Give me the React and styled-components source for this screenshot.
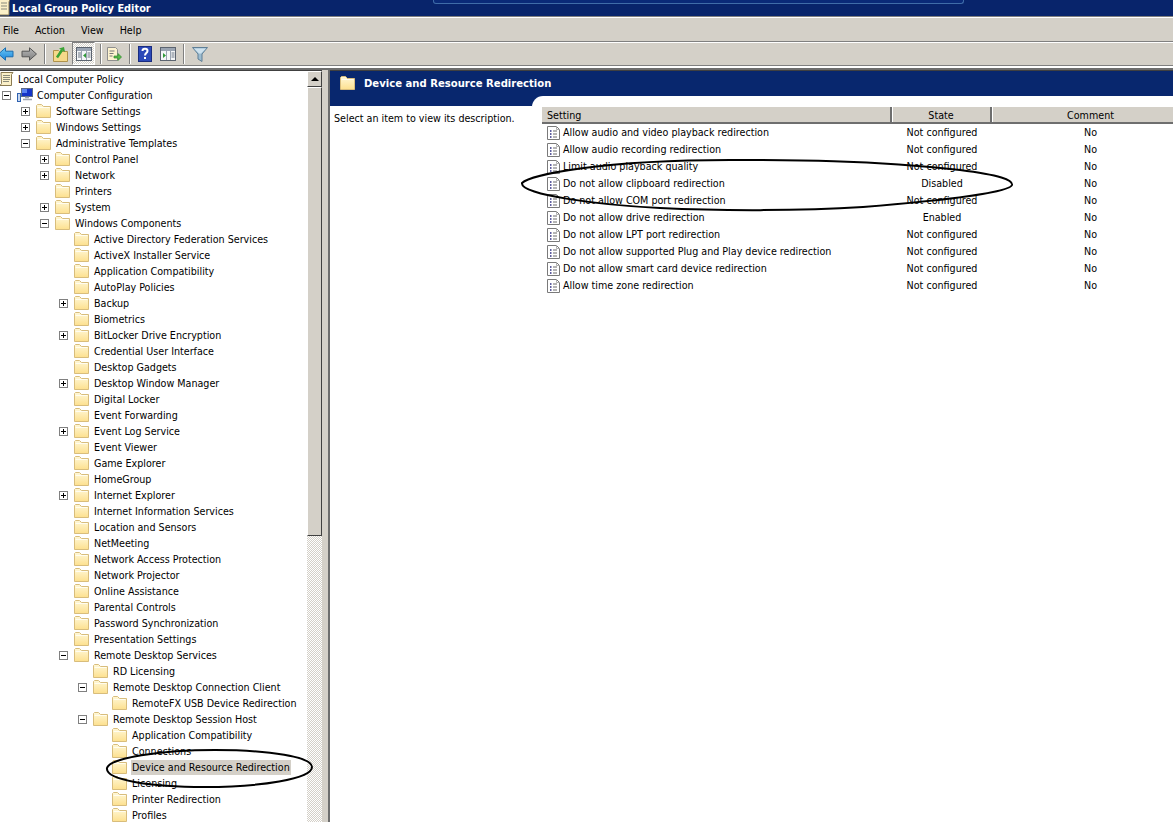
import React from "react";
import styled, { createGlobalStyle } from "styled-components";

const TREE = [
  [0, "", "policy", "Local Computer Policy"],
  [1, "-", "computer", "Computer Configuration"],
  [2, "+", "folder", "Software Settings"],
  [2, "+", "folder", "Windows Settings"],
  [2, "-", "folder", "Administrative Templates"],
  [3, "+", "folder", "Control Panel"],
  [3, "+", "folder", "Network"],
  [3, "", "folder", "Printers"],
  [3, "+", "folder", "System"],
  [3, "-", "folder", "Windows Components"],
  [4, "", "folder", "Active Directory Federation Services"],
  [4, "", "folder", "ActiveX Installer Service"],
  [4, "", "folder", "Application Compatibility"],
  [4, "", "folder", "AutoPlay Policies"],
  [4, "+", "folder", "Backup"],
  [4, "", "folder", "Biometrics"],
  [4, "+", "folder", "BitLocker Drive Encryption"],
  [4, "", "folder", "Credential User Interface"],
  [4, "", "folder", "Desktop Gadgets"],
  [4, "+", "folder", "Desktop Window Manager"],
  [4, "", "folder", "Digital Locker"],
  [4, "", "folder", "Event Forwarding"],
  [4, "+", "folder", "Event Log Service"],
  [4, "", "folder", "Event Viewer"],
  [4, "", "folder", "Game Explorer"],
  [4, "", "folder", "HomeGroup"],
  [4, "+", "folder", "Internet Explorer"],
  [4, "", "folder", "Internet Information Services"],
  [4, "", "folder", "Location and Sensors"],
  [4, "", "folder", "NetMeeting"],
  [4, "", "folder", "Network Access Protection"],
  [4, "", "folder", "Network Projector"],
  [4, "", "folder", "Online Assistance"],
  [4, "", "folder", "Parental Controls"],
  [4, "", "folder", "Password Synchronization"],
  [4, "", "folder", "Presentation Settings"],
  [4, "-", "folder", "Remote Desktop Services"],
  [5, "", "folder", "RD Licensing"],
  [5, "-", "folder", "Remote Desktop Connection Client"],
  [6, "", "folder", "RemoteFX USB Device Redirection"],
  [5, "-", "folder", "Remote Desktop Session Host"],
  [6, "", "folder", "Application Compatibility"],
  [6, "", "folder", "Connections"],
  [6, "", "folder", "Device and Resource Redirection", true],
  [6, "", "folder", "Licensing"],
  [6, "", "folder", "Printer Redirection"],
  [6, "", "folder", "Profiles"],
];

const SETTINGS = [
  ["Allow audio and video playback redirection", "Not configured"],
  ["Allow audio recording redirection", "Not configured"],
  ["Limit audio playback quality", "Not configured"],
  ["Do not allow clipboard redirection", "Disabled"],
  ["Do not allow COM port redirection", "Not configured"],
  ["Do not allow drive redirection", "Enabled"],
  ["Do not allow LPT port redirection", "Not configured"],
  ["Do not allow supported Plug and Play device redirection", "Not configured"],
  ["Do not allow smart card device redirection", "Not configured"],
  ["Allow time zone redirection", "Not configured"],
];

const GlobalStyle = createGlobalStyle`
  html, body {
    margin: 0;
    padding: 0;
    background: #fff;
  }
  body {
    font-family: "DejaVu Sans Condensed", "DejaVu Sans", sans-serif;
    font-size: 10.65px;
    color: #000;
  }
`;

const dither = `
  background-color: #fff;
  background-image: conic-gradient(#d4d0c8 25%, #fff 0 50%, #d4d0c8 0 75%, #fff 0);
  background-size: 2px 2px;
`;

const Window = styled.div`
  position: relative;
  width: 1173px;
  height: 822px;
  overflow: hidden;
  display: flex;
  flex-direction: column;
  background: #d4d0c8;
`;

const TitleBar = styled.div`
  position: relative;
  height: 16px;
  flex: none;
  display: flex;
  align-items: center;
  gap: 1px;
  background: #08246b;
  color: #fff;
  font-size: 10.9px;
  font-weight: bold;
`;

const ConnectionBar = styled.div`
  position: absolute;
  left: 433px;
  top: 0;
  width: 529px;
  height: 3px;
  background: #0a2a78;
  border: 1px solid #3f6ca8;
  border-top: 0;
  border-radius: 0 0 3px 3px;
`;

const MenuBar = styled.div`
  height: 26px;
  flex: none;
  box-sizing: border-box;
  border-top: 1px solid #808080;
  box-shadow: inset 0 1px 0 #fff;
  border-bottom: 1px solid #808080;
  display: flex;
  align-items: center;
  gap: 16px;
  padding: 2px 0 0 3px;
`;

const ToolBar = styled.div`
  height: 24px;
  flex: none;
  box-sizing: border-box;
  border-bottom: 1px solid #808080;
  box-shadow: inset 0 1px 0 #fff;
  display: flex;
  align-items: center;
`;

const ToolSep = styled.div`
  width: 1px;
  height: 20px;
  flex: none;
  margin-left: ${(p) => p.$ml}px;
  background: #808080;
  box-shadow: 1px 0 0 #fff;
`;

const ToolBtn = styled.div`
  width: 23px;
  height: 23px;
  flex: none;
  margin-left: ${(p) => p.$ml}px;
  display: flex;
  align-items: center;
  justify-content: center;
  box-sizing: border-box;
  border: 1px solid;
  border-color: #808080 #fff #fff #808080;
  ${dither}
`;

const ToolSvg = styled.svg`
  display: block;
  flex: none;
  margin-left: ${(p) => p.$ml || 0}px;
`;

const Workspace = styled.div`
  flex: 1;
  min-height: 0;
  display: flex;
  border-top: 2px solid #fff;
  box-shadow: inset 0 2px 0 #6e6e6e;
  padding-top: 2px;
`;

const TreePane = styled.div`
  width: 322px;
  flex: none;
  display: flex;
  background: #fff;
  border-top: 1px solid #404040;
  overflow: hidden;
`;

const TreeList = styled.div`
  flex: 1;
  min-width: 0;
  overflow: hidden;
`;

const TreeRow = styled.div`
  height: 16px;
  display: flex;
  align-items: center;
  padding-left: ${(p) => (p.$level === 0 ? 0 : p.$level * 19 - 17)}px;
  white-space: nowrap;
`;

const Expander = styled.div`
  position: relative;
  width: 9px;
  height: 9px;
  flex: none;
  box-sizing: border-box;
  margin-right: 6px;
  border: 1px solid #808080;
  background: #fff;
  visibility: ${(p) => (p.$kind ? "visible" : "hidden")};
  &::before {
    content: "";
    position: absolute;
    left: 1px;
    top: 3px;
    width: 5px;
    height: 1px;
    background: #000;
  }
  &::after {
    content: "";
    display: ${(p) => (p.$kind === "+" ? "block" : "none")};
    position: absolute;
    left: 3px;
    top: 1px;
    width: 1px;
    height: 5px;
    background: #000;
  }
`;

const NodeIcon = styled.svg`
  width: ${(p) => p.$w || 16}px;
  height: 16px;
  flex: none;
`;

const NodeLabel = styled.span`
  margin-left: 3px;
  padding: 0 1px;
  height: 15px;
  line-height: 15px;
  background: ${(p) => (p.$selected ? "#d4d0c8" : "transparent")};
`;

const ScrollBar = styled.div`
  width: 15px;
  flex: none;
  display: flex;
  flex-direction: column;
  ${dither}
`;

const ScrollButton = styled.div`
  height: 16px;
  flex: none;
  box-sizing: border-box;
  background: #d4d0c8;
  border: 1px solid;
  border-color: #fff #404040 #404040 #fff;
  display: flex;
  align-items: center;
  justify-content: center;
  &::after {
    content: "";
    border: 4px solid transparent;
    border-top: 0;
    border-bottom: 4px solid #000;
  }
`;

const ScrollThumb = styled.div`
  height: 449px;
  flex: none;
  box-sizing: border-box;
  background: #d4d0c8;
  border: 1px solid;
  border-color: #fff #404040 #404040 #fff;
`;

const Splitter = styled.div`
  width: 8px;
  flex: none;
  box-sizing: border-box;
  background: #d4d0c8;
  border-right: 2px solid #6e6e6e;
`;

const RightPane = styled.div`
  flex: 1;
  min-width: 0;
  display: flex;
  flex-direction: column;
  background: #fff;
  border-top: 1px solid #404040;
`;

const PaneHeader = styled.div`
  height: 25px;
  flex: none;
  display: flex;
  align-items: center;
  gap: 8px;
  padding: 0 0 1px 10px;
  box-sizing: border-box;
  background: #08276e;
  color: #fff;
  font-size: 11.2px;
  font-weight: bold;
`;

const PaneBody = styled.div`
  flex: 1;
  min-height: 0;
  display: grid;
  grid-template-columns: 202px 1fr;
`;

const DescColumn = styled.div`
  background: linear-gradient(#08276e 10px, #fff 10px);
  padding: 16px 0 0 4px;
  line-height: 13px;
`;

const ListColumn = styled.div`
  background: #08276e;
  min-width: 0;
`;

const ListSheet = styled.div`
  height: 100%;
  background: #fff;
  border-top-left-radius: 11px;
  padding: 11px 0 0 10px;
  box-sizing: border-box;
`;

const HeaderRow = styled.div`
  display: grid;
  grid-template-columns: 350px 100px 197px;
  height: 15px;
  background: #d4d0c8;
  border-bottom: 2px solid #6e6e6e;
`;

const HeaderCell = styled.div`
  line-height: 17px;
  height: 15px;
  box-sizing: border-box;
  text-align: ${(p) => (p.$first ? "left" : "center")};
  padding-left: ${(p) => (p.$first ? "5px" : "0")};
  border-right: ${(p) => (p.$last ? "0" : "2px solid #6e6e6e")};
  box-shadow: ${(p) => (p.$last ? "none" : "1px 0 0 #fff")};
`;

const SettingRow = styled.div`
  display: grid;
  grid-template-columns: 350px 100px 197px;
  height: 17px;
  align-items: center;
`;

const SettingName = styled.div`
  display: flex;
  align-items: center;
  gap: 3px;
  padding-left: 5px;
  white-space: nowrap;
`;

const CenterCell = styled.div`
  text-align: center;
`;

const Overlay = styled.svg`
  position: absolute;
  left: 0;
  top: 0;
  width: 1173px;
  height: 822px;
  pointer-events: none;
`;

const Folder = () => (
  <NodeIcon viewBox="0 0 16 16">
    <defs>
      <linearGradient id="folderFill" x1="0" y1="0" x2="0" y2="1">
        <stop offset="0" stopColor="#fff8d8" />
        <stop offset="1" stopColor="#fde08e" />
      </linearGradient>
    </defs>
    <path d="M.5 14.5V2.5l1-1h4l2 2h7v11z" fill="url(#folderFill)" stroke="#d8bd7c" />
    <path d="M1.5 4.5h12" stroke="#fffdf0" />
  </NodeIcon>
);

const PolicyScroll = () => (
  <NodeIcon $w={14} viewBox="2 0 14 16">
    <path d="M3 1.5h12l-1.5 2v11H2l1.5-2z" fill="#fbf0c8" stroke="#8a7a52" />
    <path d="M5 4.5h7M5 6.5h7M5 8.5h7M5 10.5h6" stroke="#8a8a7a" />
  </NodeIcon>
);

const ComputerIcon = () => (
  <NodeIcon viewBox="0 0 16 16">
    <rect x="4.5" y="1.5" width="11" height="8" fill="#1533c8" stroke="#5a6a88" />
    <rect x="5" y="2" width="5" height="4" fill="#5a82f0" />
    <path d="M8 10.5h4M6 12.5h9" stroke="#a0a4b0" strokeWidth="1.5" />
    <rect x=".5" y="6.5" width="3" height="8" fill="#c8d8f0" stroke="#2f62b0" />
  </NodeIcon>
);

const SettingIcon = () => (
  <svg width="13" height="14" viewBox="0 0 13 14" style={{ flex: "none" }}>
    <path d="M.5.5h9l3 3v10H.5z" fill="#fff" stroke="#7a7a7a" />
    <path d="M9.5.5v3h3" fill="none" stroke="#b0b0b0" />
    <path d="M3 5h1.5M3 8h1.5M3 11h1.5" stroke="#2b2b80" strokeWidth="1.5" />
    <path d="M6 5h4M6 8h4M6 11h4" stroke="#6a6a6a" />
  </svg>
);

const ArrowBack = () => (
  <ToolSvg $ml={-2} width="16" height="14" viewBox="0 0 16 14">
    <defs>
      <linearGradient id="backFill" x1="0" y1="0" x2="0" y2="1">
        <stop offset="0" stopColor="#6cc8f4" />
        <stop offset="1" stopColor="#1c84dc" />
      </linearGradient>
    </defs>
    <path d="M.5 7L7.5.8v3.4h7.5v5.6H7.5v3.4z" fill="url(#backFill)" stroke="#1a6db0" />
  </ToolSvg>
);

const ArrowFwd = () => (
  <ToolSvg $ml={7} width="16" height="14" viewBox="0 0 16 14">
    <defs>
      <linearGradient id="fwdFill" x1="0" y1="0" x2="0" y2="1">
        <stop offset="0" stopColor="#b8b8b8" />
        <stop offset="1" stopColor="#7e7e7e" />
      </linearGradient>
    </defs>
    <path d="M15.5 7L8.5.8v3.4H1v5.6h7.5v3.4z" fill="url(#fwdFill)" stroke="#555" />
  </ToolSvg>
);

const UpFolder = () => (
  <ToolSvg $ml={8} width="15" height="16" viewBox="0 0 15 16">
    <path d="M.5 15.5V4.5h5l1 1h8v10z" fill="#f6d98a" stroke="#b0924a" />
    <path d="M4 11.5L9 4" stroke="#3aa335" strokeWidth="2.5" fill="none" />
    <path d="M6 2.5l5-1.5 1 5z" fill="#3aa335" />
  </ToolSvg>
);

const ConsoleTree = ({ right, ml }) => (
  <ToolSvg $ml={ml} width="16" height="14" viewBox="0 0 16 14">
    <rect x=".5" y=".5" width="15" height="13" fill="#f4f6f8" stroke="#5c6470" />
    <rect x="1" y="1" width="14" height="3" fill="#9aa4b2" />
    <path d={right ? "M6.5 4v9M10.5 4v9" : "M5.5 4v9M10.5 4v9"} stroke="#9aa4b2" />
    <path d={right ? "M3 6l3 2.5L3 11z" : "M10 6l-3 2.5 3 2.5z"} fill="#2f9a38" />
    <path d={right ? "M11.5 6h3M11.5 8h3M11.5 10h3" : "M2 6h3M2 8h3M2 10h3M11.5 6h3M11.5 8h3M11.5 10h3"} stroke="#6d7784" />
  </ToolSvg>
);

const ExportList = () => (
  <ToolSvg $ml={5} width="16" height="16" viewBox="0 0 16 16">
    <path d="M1.5 1.5h8l2 2v11h-10z" fill="#fdf3cf" stroke="#8f8f8f" />
    <path d="M3.5 5h5M3.5 7.5h4M3.5 10h3" stroke="#777" />
    <path d="M8 10h4V7.5l3.5 3.5-3.5 3.5V12H8z" fill="#56b948" stroke="#2f8a2c" strokeWidth=".7" />
  </ToolSvg>
);

const HelpIcon = () => (
  <ToolSvg $ml={8} width="14" height="16" viewBox="0 0 14 16">
    <rect x=".5" y=".5" width="13" height="15" fill="#2c49b8" stroke="#1a2c80" />
    <path d="M4.5 5c0-3 5-3 5 0 0 2-2.5 2.2-2.5 4.5" fill="none" stroke="#fff" strokeWidth="2" />
    <rect x="6" y="11" width="2" height="2" fill="#fff" />
  </ToolSvg>
);

const FilterIcon = () => (
  <ToolSvg $ml={8} width="16" height="16" viewBox="0 0 16 16">
    <path d="M.5 1.5h15L10 8v7.5L6 13V8z" fill="#9cbcd0" stroke="#5f7f97" />
    <path d="M2 2.5h12L9 7.5H7z" fill="#cfe2ee" />
  </ToolSvg>
);

const TitleIcon = () => (
  <ToolSvg width="11" height="16" viewBox="0 0 11 16">
    <path d="M-2 -1h12l-1 3v13H-3l1-3z" fill="#fbf0c8" stroke="#8a7a52" />
    <path d="M1 3h6M1 6h6M1 9h6" stroke="#8a8a7a" />
  </ToolSvg>
);

const nodeIcons = { folder: Folder, policy: PolicyScroll, computer: ComputerIcon };

export default function App() {
  return (
    <Window>
      <GlobalStyle />
      <TitleBar>
        <TitleIcon />
        <span>Local Group Policy Editor</span>
        <ConnectionBar />
      </TitleBar>
      <MenuBar>
        <span>File</span>
        <span>Action</span>
        <span>View</span>
        <span>Help</span>
      </MenuBar>
      <ToolBar>
        <ArrowBack />
        <ArrowFwd />
        <ToolSep $ml={7} />
        <UpFolder />
        <ToolBtn $ml={4}><ConsoleTree /></ToolBtn>
        <ToolSep $ml={5} />
        <ExportList />
        <ToolSep $ml={7} />
        <HelpIcon />
        <ConsoleTree right ml={8} />
        <ToolSep $ml={7} />
        <FilterIcon />
      </ToolBar>
      <Workspace>
        <TreePane>
          <TreeList>
            {TREE.map(([level, exp, icon, label, selected], i) => {
              const Icon = nodeIcons[icon];
              return (
                <TreeRow key={i} $level={level}>
                  {level > 0 && <Expander $kind={exp} />}
                  <Icon />
                  <NodeLabel $selected={selected}>{label}</NodeLabel>
                </TreeRow>
              );
            })}
          </TreeList>
          <ScrollBar>
            <ScrollButton />
            <ScrollThumb />
          </ScrollBar>
        </TreePane>
        <Splitter />
        <RightPane>
          <PaneHeader>
            <Folder />
            <span>Device and Resource Redirection</span>
          </PaneHeader>
          <PaneBody>
            <DescColumn>Select an item to view its description.</DescColumn>
            <ListColumn>
              <ListSheet>
                <HeaderRow>
                  <HeaderCell $first>Setting</HeaderCell>
                  <HeaderCell>State</HeaderCell>
                  <HeaderCell $last>Comment</HeaderCell>
                </HeaderRow>
                {SETTINGS.map(([name, state]) => (
                  <SettingRow key={name}>
                    <SettingName>
                      <SettingIcon />
                      {name}
                    </SettingName>
                    <CenterCell>{state}</CenterCell>
                    <CenterCell>No</CenterCell>
                  </SettingRow>
                ))}
              </ListSheet>
            </ListColumn>
          </PaneBody>
        </RightPane>
      </Workspace>
      <Overlay viewBox="0 0 1173 822">
        <path
          d="M522 183C530 175 600 160 730 160C790 160 870 160 960 170C1000 175 1013 180 1012 185C1010 192 950 200 863 207C800 211 720 211 660 208C600 205 520 195 522 183Z"
          fill="none"
          stroke="#000"
          strokeWidth="2"
        />
        <path
          d="M107 768C110 758 160 750 215 750C270 750 312 757 312 767C312 779 260 787 205 787C150 787 105 780 107 768Z"
          fill="none"
          stroke="#000"
          strokeWidth="2"
        />
      </Overlay>
    </Window>
  );
}
